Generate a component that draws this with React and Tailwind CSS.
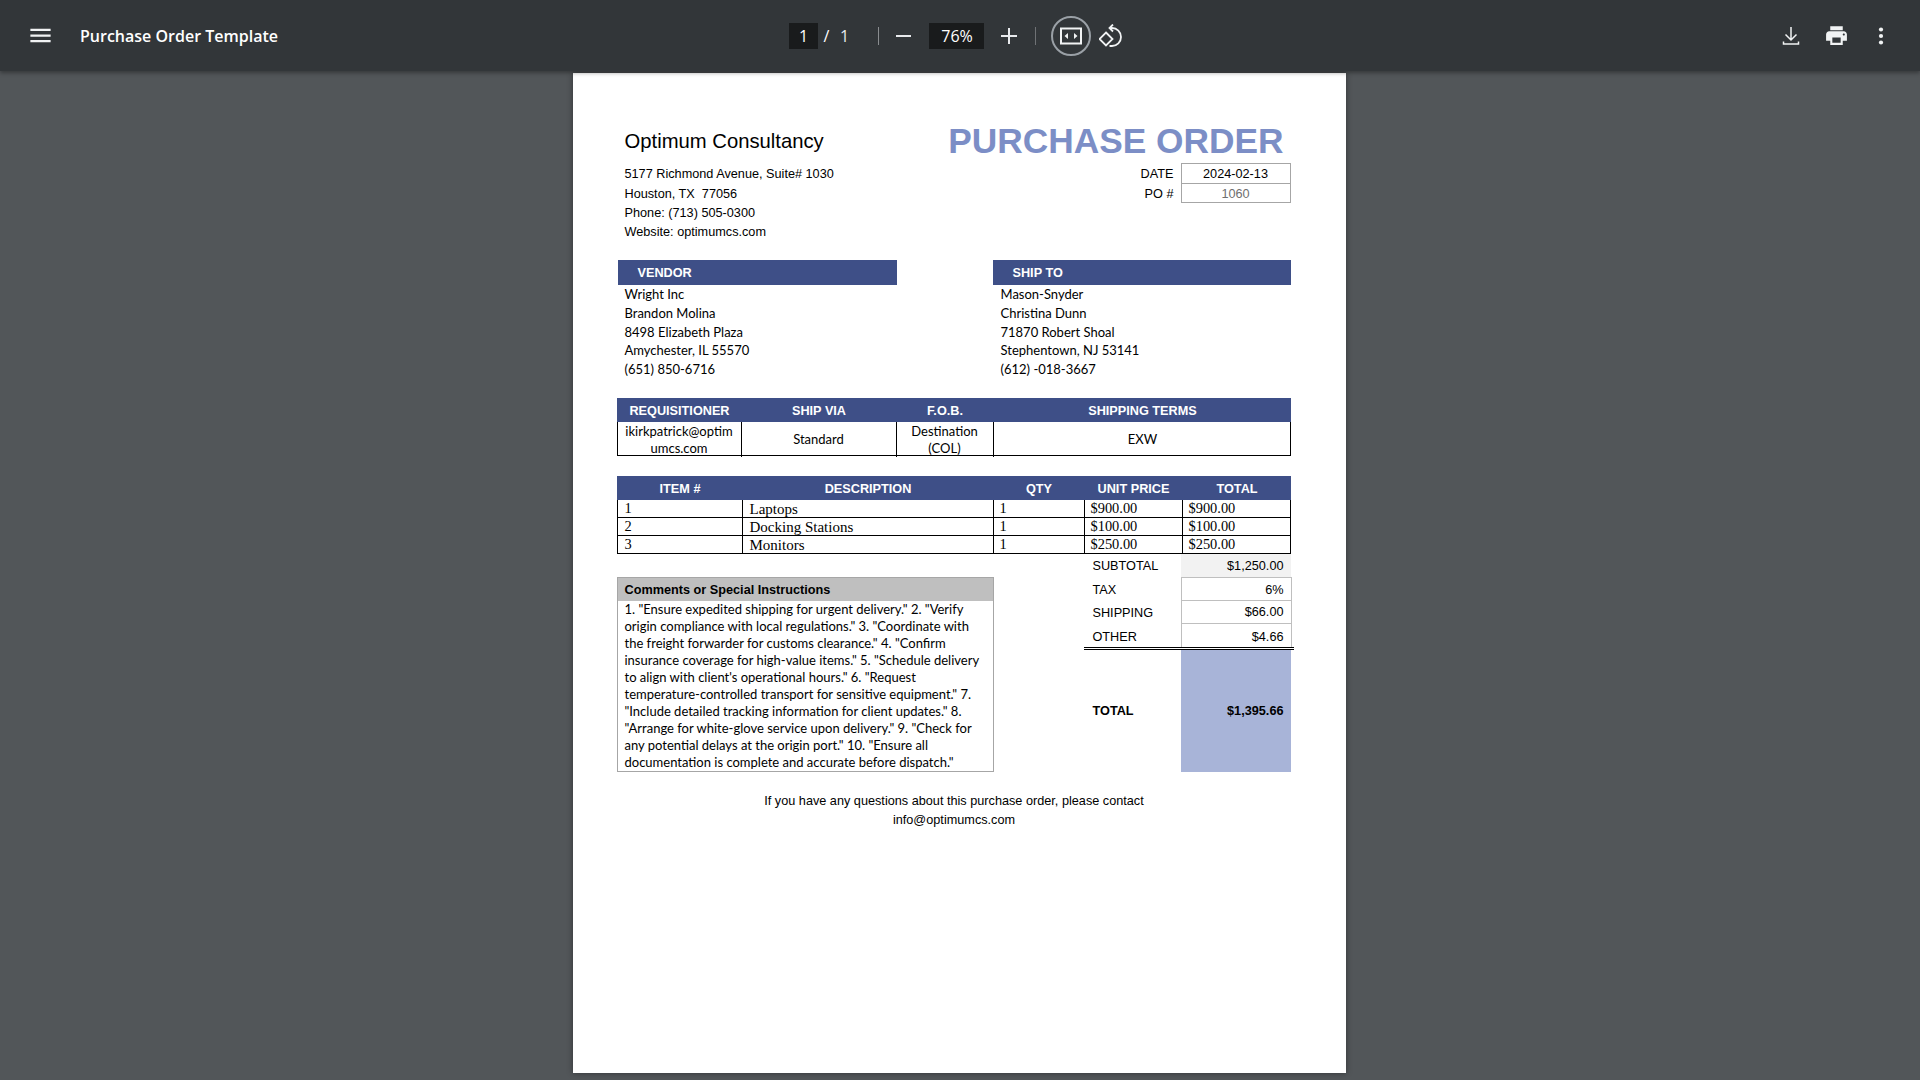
const vendorLines = ['Wright Inc', 'Brandon Molina', '8498 Elizabeth Plaza', 'Amychester, IL 55570', '(651) 850-6716'];
const shipLines = ['Mason-Snyder', 'Christina Dunn', '71870 Robert Shoal', 'Stephentown, NJ 53141', '(612) -018-3667'];
const items = [
  ['1', 'Laptops', '1', '$900.00', '$900.00'],
  ['2', 'Docking Stations', '1', '$100.00', '$100.00'],
  ['3', 'Monitors', '1', '$250.00', '$250.00'],
];
const comments =
  '1. "Ensure expedited shipping for urgent delivery." 2. "Verify origin compliance with local regulations." 3. "Coordinate with the freight forwarder for customs clearance." 4. "Confirm insurance coverage for high-value items." 5. "Schedule delivery to align with client\'s operational hours." 6. "Request temperature-controlled transport for sensitive equipment." 7. "Include detailed tracking information for client updates." 8. "Arrange for white-glove service upon delivery." 9. "Check for any potential delays at the origin port." 10. "Ensure all documentation is complete and accurate before dispatch."';

function Toolbar() {
  return (
    <div className="h-[71px] shrink-0 flex items-center bg-[#323639] text-white shadow-[0_2px_4px_rgba(0,0,0,0.35)] relative z-10 font-['Open_Sans',sans-serif]">
      <div className="w-[80px] shrink-0 flex justify-start pl-[27px]">
        <svg width="27" height="27" viewBox="0 0 24 24" fill="#f1f3f4">
          <path d="M3 18h18v-2H3v2zm0-5h18v-2H3v2zm0-7v2h18V6H3z" />
        </svg>
      </div>
      <div className="w-[709px] shrink-0 text-[16px] font-semibold">Purchase Order Template</div>
      <div className="w-[29px] h-[26px] shrink-0 bg-[#191b1c] flex items-center justify-center text-[16px]">1</div>
      <div className="w-[16px] text-center text-[16px] pl-[1px]">/</div>
      <div className="w-[20px] text-center text-[16px] text-[#e8eaed] pl-[1px]">1</div>
      <div className="w-px h-[18px] ml-[24px] bg-[#8a8d90]" />
      <div className="w-[15px] h-[2px] ml-[17px] bg-[#e8eaed]" />
      <div className="w-[55px] h-[26px] ml-[18px] bg-[#191b1c] flex items-center justify-center text-[16px] pl-px">76%</div>
      <svg className="ml-[17px]" width="16" height="16" viewBox="0 0 16 16" fill="#e8eaed">
        <path d="M7 0h2v7h7v2H9v7H7V9H0V7h7z" />
      </svg>
      <div className="w-px h-[18px] ml-[18px] bg-[#6f7275]" />
      <div className="w-[40px] h-[40px] ml-[15px] rounded-full border-2 border-[#9aa0a6] flex items-center justify-center">
        <svg width="24" height="20" viewBox="0 0 24 20" fill="none">
          <rect x="2" y="2.5" width="20" height="15" stroke="#f1f3f4" strokeWidth="2" />
          <path d="M5.5 10 9 7v6zM18.5 10 15 7v6z" fill="#f1f3f4" />
        </svg>
      </div>
      <svg className="ml-[8px]" width="24" height="24" viewBox="0 0 24 24" fill="none" stroke="#f1f3f4" strokeWidth="1.8">
        <path d="M7 8.5 13.5 15 7 21.5 .5 15z" />
        <path d="M11 4h2a9 9 0 0 1 0 18h-2.5" />
        <path d="M14 .5 10.5 4 14 7.5" />
      </svg>
      <div className="ml-auto flex items-center">
        <svg width="20" height="20" viewBox="0 0 20 20" fill="none" stroke="#f1f3f4" strokeWidth="1.5">
          <path d="M10 1v13M4.5 8.5 10 14l5.500-5.500M2.500 15.500V18h15v-2.500" />
        </svg>
        <svg className="ml-[23px]" width="25" height="25" viewBox="0 0 24 24" fill="#f1f3f4">
          <path d="M19 8H5c-1.66 0-3 1.34-3 3v6h4v4h12v-4h4v-6c0-1.660-1.340-3-3-3zm-3 11H8v-5h8v5zm3-7c-.55 0-1-.45-1-1s.45-1 1-1 1 .45 1 1-.45 1-1 1zm-1-9H6v4h12V3z" />
        </svg>
        <svg className="ml-[29px] mr-[36px]" width="6" height="20" viewBox="0 0 6 20" fill="#f1f3f4">
          <circle cx="3" cy="3.5" r="2.1" />
          <circle cx="3" cy="10" r="2.1" />
          <circle cx="3" cy="16.5" r="2.1" />
        </svg>
      </div>
    </div>
  );
}

function BlueHead({ children, className }) {
  return <div className={"bg-[#3e4f87] text-white font-bold text-[12.7px] " + className}>{children}</div>;
}

function PageBody() {
  return (
    <div className="w-[773px] h-[1000px] mt-[2px] bg-white shadow-[0_0_6px_rgba(0,0,0,0.4)] pl-[44px] pt-[54px] text-black font-['Liberation_Sans',sans-serif] text-[12.7px]">
      <div className="w-[674px] flex flex-col">
        {/* letterhead */}
        <div className="flex justify-between h-[133px]">
          <div className="pl-[8px]">
            <div className="text-[20.25px] leading-[28px]">Optimum Consultancy</div>
            <div className="mt-[10px] leading-[19px]">
              <div>5177 Richmond Avenue, Suite# 1030</div>
              <div className="mt-px">Houston, TX&nbsp; 77056</div>
              <div>Phone: (713) 505-0300</div>
              <div>Website: optimumcs.com</div>
            </div>
          </div>
          <div className="flex flex-col items-end">
            <div className="text-[35.3px] leading-[28px] font-bold text-[#7c8ec6] pr-[7px]">PURCHASE ORDER</div>
            <div className="mt-[8px] flex">
              <div className="text-right pr-[7px] leading-[20px] pt-px">
                <div>DATE</div>
                <div>PO #</div>
              </div>
              <div className="w-[110px] h-[40px] border border-[#a6a6a6] text-center leading-[20px]">
                <div className="h-[20px] border-b border-[#a6a6a6]">2024-02-13</div>
                <div className="text-[#6f6f6f]">1060</div>
              </div>
            </div>
          </div>
        </div>

        {/* vendor / ship to */}
        <div className="flex ml-px h-[119px]">
          <div className="w-[279px]">
            <BlueHead className="h-[25px] leading-[26px] pl-[20px]">VENDOR</BlueHead>
            <div className="pl-[7px] font-['Lato',sans-serif] text-[13px] leading-[18.75px]">
              {vendorLines.map((l) => <div key={l}>{l}</div>)}
            </div>
          </div>
          <div className="w-[298px] ml-[96px]">
            <BlueHead className="h-[25px] leading-[26px] pl-[20px]">SHIP TO</BlueHead>
            <div className="pl-[8px] font-['Lato',sans-serif] text-[13px] leading-[18.75px]">
              {shipLines.map((l) => <div key={l}>{l}</div>)}
            </div>
          </div>
        </div>

        {/* shipping info */}
        <BlueHead className="mt-[19px] h-[24px] leading-[26px] grid grid-cols-[124px_155px_97px_298px] text-center pl-px">
          <div>REQUISITIONER</div>
          <div>SHIP VIA</div>
          <div>F.O.B.</div>
          <div>SHIPPING TERMS</div>
        </BlueHead>
        <div className="h-[34px] grid grid-cols-[124px_155px_97px_298px] border-x border-b border-black text-center font-['Lato',sans-serif] text-[13px] leading-[17px]">
          <div className="border-r border-black pt-px">ikirkpatrick@optim<br />umcs.com</div>
          <div className="border-r border-black flex items-center justify-center">Standard</div>
          <div className="border-r border-black pt-px">Destination<br />(COL)</div>
          <div className="flex items-center justify-center">EXW</div>
        </div>

        {/* line items */}
        <BlueHead className="mt-[20px] h-[24px] leading-[26px] grid grid-cols-[125px_251px_91px_98px_109px] text-center pl-px">
          <div>ITEM #</div>
          <div>DESCRIPTION</div>
          <div>QTY</div>
          <div>UNIT PRICE</div>
          <div>TOTAL</div>
        </BlueHead>
        <div className="w-[673px] border-l border-black font-['Liberation_Serif',serif] text-[14.4px]">
          {items.map((row) => (
            <div key={row[0]} className="h-[18px] grid grid-cols-[125px_251px_91px_98px_108px] border-b border-black leading-[17px]">
              <div className="border-r border-black pl-[7px]">{row[0]}</div>
              <div className="border-r border-black pl-[7px] text-[15px] leading-[18px]">{row[1]}</div>
              <div className="border-r border-black pl-[6px]">{row[2]}</div>
              <div className="border-r border-black pl-[6px]">{row[3]}</div>
              <div className="border-r border-black pl-[6px]">{row[4]}</div>
            </div>
          ))}
        </div>

        {/* comments and totals */}
        <div className="flex">
          <div className="w-[377px] h-[195px] shrink-0 mt-[23px] border border-[#a6a6a6]">
            <div className="h-[23px] leading-[25px] bg-[#bfbfbf] font-bold pl-[7px]">Comments or Special Instructions</div>
            <div className="px-[7px] font-['Lato',sans-serif] text-[13px] leading-[17px]">{comments}</div>
          </div>
          <div className="w-[210px] shrink-0 ml-[90px]">
            <div className="h-[23px] flex">
              <div className="w-[97px] pl-[9px] leading-[25px]">SUBTOTAL</div>
              <div className="w-[110px] bg-[#f2f2f2] text-right pr-[7px] leading-[24px]">$1,250.00</div>
            </div>
            <div className="h-[24px] flex">
              <div className="w-[97px] pl-[9px] leading-[26px]">TAX</div>
              <div className="w-[111px] border border-[#bfbfbf] text-right pr-[7px] leading-[25px]">6%</div>
            </div>
            <div className="h-[23px] flex">
              <div className="w-[97px] pl-[9px] leading-[24px]">SHIPPING</div>
              <div className="w-[111px] border-x border-b border-[#bfbfbf] text-right pr-[7px] leading-[23px]">$66.00</div>
            </div>
            <div className="h-[23px] flex">
              <div className="w-[97px] pl-[9px] leading-[26px]">OTHER</div>
              <div className="w-[111px] border-x border-[#bfbfbf] text-right pr-[7px] leading-[26px]">$4.66</div>
            </div>
            <div className="h-[3px] border-y border-black" />
            <div className="h-[122px] flex font-bold">
              <div className="w-[97px] pl-[9px] leading-[122px]">TOTAL</div>
              <div className="w-[110px] bg-[#a8b4d8] text-right pr-[7px] leading-[122px]">$1,395.66</div>
            </div>
          </div>
        </div>

        <div className="mt-[20px] text-center leading-[19px] pl-px">
          <div>If you have any questions about this purchase order, please contact</div>
          <div>info@optimumcs.com</div>
        </div>
      </div>
    </div>
  );
}

export default function App() {
  return (
    <div className="w-[1920px] h-[1080px] overflow-hidden flex flex-col bg-[#525659]">
      <Toolbar />
      <div className="flex justify-center pr-[2px]">
        <PageBody />
      </div>
    </div>
  );
}
